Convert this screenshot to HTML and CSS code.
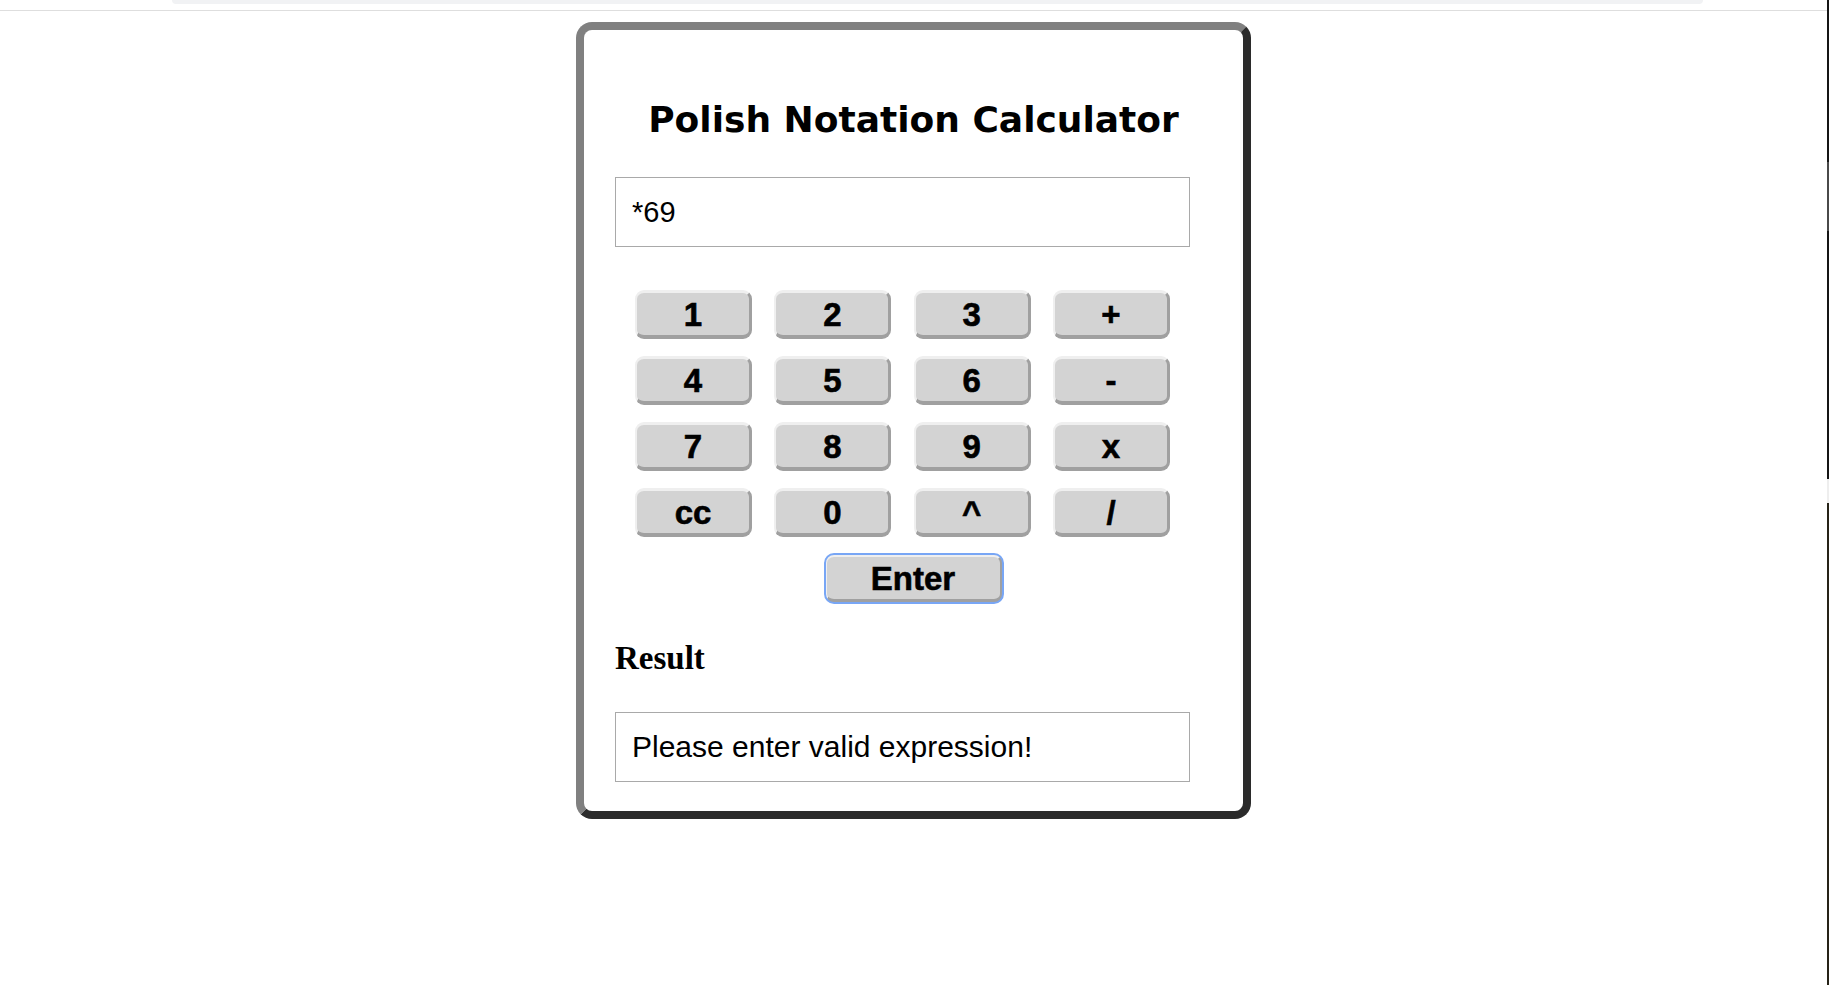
FILE: index.html
```html
<!DOCTYPE html>
<html lang="en">
<head>
<meta charset="utf-8">
<title>Polish Notation Calculator</title>
<link rel="stylesheet" href="styles.css">
</head>
<body>
<div class="page">
  <div class="main">
    <div class="topbar"><div class="tabstrip"></div></div>
    <div class="stage">
      <div class="card">
        <h1 class="title">Polish Notation Calculator</h1>
        <input class="field col expr" type="text" value="*69">
        <div class="keypad col">
          <button class="key">1</button>
          <button class="key">2</button>
          <button class="key">3</button>
          <button class="key">+</button>
          <button class="key">4</button>
          <button class="key">5</button>
          <button class="key">6</button>
          <button class="key">-</button>
          <button class="key">7</button>
          <button class="key">8</button>
          <button class="key">9</button>
          <button class="key">x</button>
          <button class="key">cc</button>
          <button class="key">0</button>
          <button class="key">^</button>
          <button class="key">/</button>
        </div>
        <div class="enter-row">
          <button class="key enter">Enter</button>
        </div>
        <h2 class="result-title col">Result</h2>
        <input class="field col output" type="text" value="Please enter valid expression!" readonly>
      </div>
    </div>
  </div>
  <div class="edge">
    <div class="edge-dark edge-a"></div>
    <div class="edge-grey"></div>
    <div class="edge-dark edge-b"></div>
    <div class="edge-light"></div>
    <div class="edge-dark edge-c"></div>
  </div>
</div>
</body>
</html>
```

FILE: styles.css
```css
html, body {
  margin: 0;
  padding: 0;
  background: #ffffff;
}

.page {
  display: flex;
  width: 1829px;
  height: 985px;
  overflow: hidden;
}

.main {
  flex: 1;
  display: flex;
  flex-direction: column;
}

.topbar {
  height: 10px;
  border-bottom: 1px solid #dedede;
}

.tabstrip {
  margin-left: 172px;
  width: 1531px;
  height: 4px;
  background: #f1f2f4;
  border-radius: 0 0 8px 8px;
}

.stage {
  display: flex;
  justify-content: center;
  padding-top: 11px;
}

.card {
  box-sizing: border-box;
  width: 675px;
  padding: 68px 0 29px 0;
  border: 8px solid;
  border-color: #808080 #2b2b2b #2b2b2b #808080;
  border-radius: 16px;
  display: flex;
  flex-direction: column;
}

.col {
  margin-left: 31px;
  width: 575px;
}

.title {
  margin: 0;
  font-family: "DejaVu Sans", Verdana, sans-serif;
  font-weight: bold;
  font-size: 36px;
  line-height: 44px;
  text-align: center;
  color: #000;
}

.field {
  box-sizing: border-box;
  height: 70px;
  padding: 0 16px;
  border: 1px solid #a9a9a9;
  font-family: "Liberation Sans", Arial, sans-serif;
  font-size: 29px;
  color: #000;
  background: #fff;
  outline: none;
}

.expr {
  margin-top: 35px;
}

.output {
  margin-top: 34px;
  font-size: 30px;
}

.keypad {
  box-sizing: border-box;
  margin-top: 43px;
  display: grid;
  grid-template-columns: repeat(4, 117px);
  grid-auto-rows: 49px;
  justify-content: center;
  column-gap: 22.33px;
  row-gap: 17px;
}

.key {
  box-sizing: border-box;
  margin: 0;
  padding: 0;
  background: #d3d3d3;
  border: 3px solid;
  border-color: #efefef #a0a0a0 #a0a0a0 #efefef;
  border-width: 3px 3px 4px 2px;
  border-radius: 9px;
  font-family: "Liberation Sans", Arial, sans-serif;
  font-weight: bold;
  font-size: 33px;
  line-height: 1;
  color: #000;
  -webkit-text-stroke: 0.6px #000;
}

.enter-row {
  display: flex;
  justify-content: center;
  margin-top: 17px;
}

.enter {
  width: 178px;
  height: 49px;
  outline: 2px solid #78a6f5;
  outline-offset: -1px;
}

.result-title {
  margin-top: 35px;
  margin-bottom: 0;
  font-family: "Liberation Serif", "Times New Roman", serif;
  font-weight: bold;
  font-size: 33px;
  line-height: 40px;
  color: #000;
}

.edge {
  width: 2px;
  display: flex;
  flex-direction: column;
}

.edge-dark { background: #151515; }
.edge-a { height: 162px; }
.edge-grey { height: 69px; background: #4a4a4a; }
.edge-b { height: 248px; }
.edge-light { height: 24px; background: #eeeeee; }
.edge-c { flex: 1; background: #262318; }
```
